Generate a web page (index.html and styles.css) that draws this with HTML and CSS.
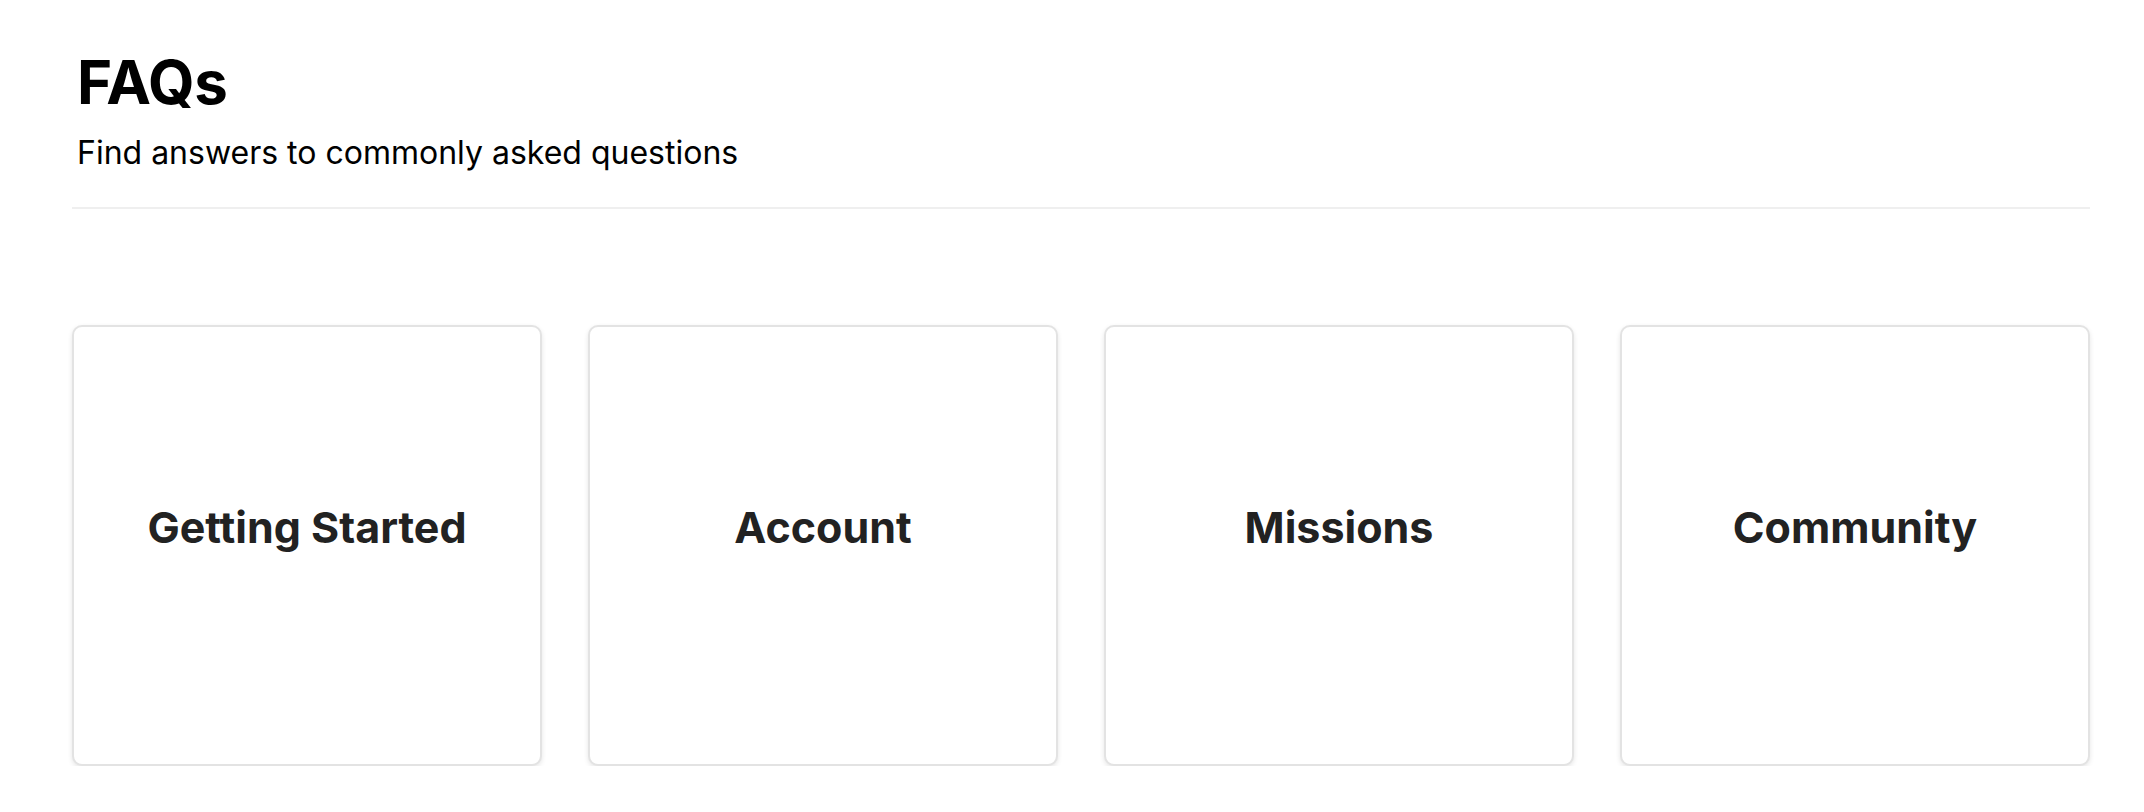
FILE: index.html
```html
<!DOCTYPE html>
<html lang="en">
<head>
<meta charset="utf-8">
<title>FAQs</title>
<link rel="stylesheet" href="styles.css">
</head>
<body>
<main class="page">
  <header class="page-header">
    <h1 class="title">FAQs</h1>
    <p class="subtitle">Find answers to commonly asked questions</p>
  </header>
  <section class="cards">
    <a class="card" href="#"><span class="card-label">Getting Started</span></a>
    <a class="card" href="#"><span class="card-label">Account</span></a>
    <a class="card" href="#"><span class="card-label">Missions</span></a>
    <a class="card" href="#"><span class="card-label">Community</span></a>
  </section>
</main>
</body>
</html>
```

FILE: styles.css
```css
* { box-sizing: border-box; }
html, body { margin: 0; padding: 0; background: #fff; }
body {
  font-family: Inter, "Noto Sans", "Liberation Sans", sans-serif;
  color: #000;
}
.page {
  padding: 46px 54px 0 72px;
}
.page-header {
  border-bottom: 2px solid #efefef;
  padding: 0 0 33px 5px;
}
.title {
  margin: 0;
  font-size: 60px;
  font-weight: 700;
  line-height: 1.2;
  letter-spacing: -0.5px;
}
.subtitle {
  margin: 14px 0 0;
  font-size: 32px;
  line-height: 1.3;
  font-weight: 400;
}
.cards {
  display: grid;
  grid-template-columns: repeat(4, 1fr);
  gap: 46px;
  margin-top: 116px;
}
.card {
  display: flex;
  align-items: center;
  justify-content: center;
  height: 441px;
  padding-bottom: 36px;
  border: 2px solid #e3e3e3;
  border-radius: 10px;
  background: #fff;
  box-shadow: 0 2px 5px rgba(0,0,0,0.1);
  text-decoration: none;
  color: #222;
}
.card-label {
  font-size: 43px;
  font-weight: 700;
}
```
